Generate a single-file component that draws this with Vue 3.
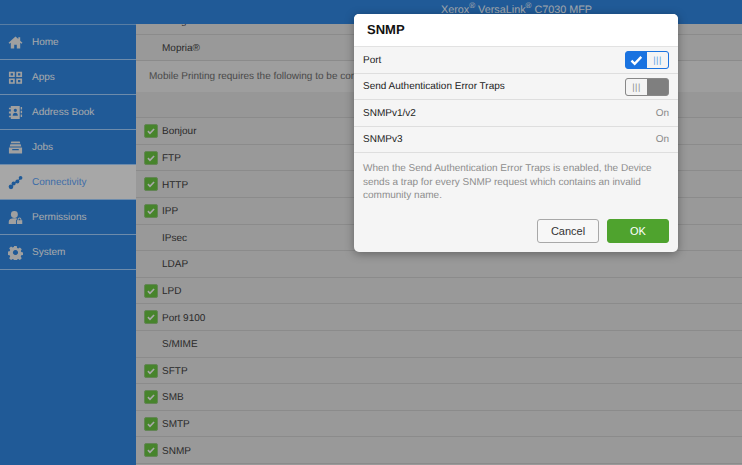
<template>
  <div class="screen">
    <header class="topbar">
      <span class="device">Xerox<sup>®</sup> VersaLink<sup>®</sup> C7030 MFP</span>
    </header>
    <div class="body">
      <nav class="sidebar">
        <a v-for="item in navItems" :key="item.name" class="nav-item" :class="{ active: item.name === 'Connectivity' }">
          <svg class="nav-icon" viewBox="0 0 16 16" v-html="item.icon"></svg>
          <span>{{ item.name }}</span>
        </a>
      </nav>
      <main class="content">
        <div class="list">
          <div class="row"><span class="name">Google Cloud Print</span></div>
          <div class="row"><span class="name">Mopria®</span></div>
          <div class="message">Mobile Printing requires the following to be configured:</div>
          <div class="band"></div>
          <div v-for="p in protocols" :key="p.name" class="row">
            <span v-if="p.on" class="check">
              <svg viewBox="0 0 14 14"><path d="M3.400 7.200 5.800 9.600l4.800-5" fill="none" stroke="#f2f2f2" stroke-width="1.900"/></svg>
            </span>
            <span class="name">{{ p.name }}</span>
          </div>
        </div>
      </main>
    </div>
    <div class="overlay"></div>
    <section class="dialog">
      <h2 class="dialog-title">SNMP</h2>
      <div class="dialog-row">
        <span>Port</span>
        <span class="toggle on">
          <span class="tick"><svg viewBox="0 0 14 12"><path d="M1.500 6.200 5 9.600l7.200-7.600" fill="none" stroke="#fff" stroke-width="2.600"/></svg></span>
          <span class="knob">|||</span>
        </span>
      </div>
      <div class="dialog-row">
        <span>Send Authentication Error Traps</span>
        <span class="toggle off">
          <span class="knob">|||</span>
          <span class="tick"></span>
        </span>
      </div>
      <div class="dialog-row">
        <span>SNMPv1/v2</span>
        <span class="state">On</span>
      </div>
      <div class="dialog-row">
        <span>SNMPv3</span>
        <span class="state">On</span>
      </div>
      <p class="help">When the Send Authentication Error Traps is enabled, the Device sends a trap for every SNMP request which contains an invalid community name.</p>
      <div class="actions">
        <button class="btn cancel">Cancel</button>
        <button class="btn ok">OK</button>
      </div>
    </section>
  </div>
</template>

<script setup>
const navItems = [
  { name: 'Home', icon: '<path d="M8 1.500 .6 8.300l1 1.100L3 8.200V14.500h3.600V10.400h2.800v4.100H13V8.200l1.400 1.200 1-1.100L13 6.100V2.400h-2v1.900z"/>' },
  { name: 'Apps', icon: '<path fill-rule="evenodd" d="M1 1.800h6.200v5.600H1zM2.800 3.400v2.400h2.600V3.400zM8.800 1.800H15v5.600H8.800zM10.600 3.400v2.400h2.600V3.400zM1 9h6.200v5.600H1zM2.800 10.600v2.400h2.600v-2.400zM8.800 9H15v5.600H8.800zM10.600 10.600v2.400h2.600v-2.400z"/>' },
  { name: 'Address Book', icon: '<path fill-rule="evenodd" d="M3 1h9.500v14H3v-2H1V11.500h2V9H1V7h2V4.500H1V3h2zM7.800 4a1.700 1.700 0 1 0 .01 0zM5 11.500h5.500c0-2-1-3.200-2.700-3.200S5 9.500 5 11.500z"/><path d="M13.500 2H15v2.800h-1.500zM13.500 6H15v2.800h-1.500zM13.500 10H15v2.800h-1.500z"/>' },
  { name: 'Jobs', icon: '<path d="M3.500 1.500h9l.6 2H2.900zM2.500 4.500h11l.7 2.500H1.800zM1 8h14v6.500H1zM4.500 9.500v1.500h7V9.500z" fill-rule="evenodd"/>' },
  { name: 'Connectivity', icon: '<g class="link"><circle cx="3.200" cy="12.600" r="2.500"/><circle cx="6" cy="9" r="2.200"/><circle cx="10" cy="7" r="2.100"/><circle cx="13.400" cy="3" r="2"/><path d="M3 12 5.500 8.200 10 6l3-3 .8.800-3.300 3.500-4.200 2-2.500 3.500z"/></g>' },
  { name: 'Permissions', icon: '<circle cx="6.800" cy="4.800" r="3.700"/><path d="M.8 15v-2.500C.8 10 3 8.800 6.800 8.800c1.200 0 2.300.1 3.200.4L8.500 11v4z"/><path fill-rule="evenodd" d="M9.500 11h.8v-1a2 2 0 0 1 4 0v1h.9v4H9.500zM11.300 11h2v-1a1 1 0 0 0-2 0z"/>' },
  { name: 'System', icon: '<path fill-rule="evenodd" d="M6.600 1h2.800l.4 2 1.300.6 1.800-1.100 2 2-1.100 1.800.6 1.300 2 .4v2.800l-2 .4-.6 1.300 1.100 1.800-2 2-1.800-1.100-1.300.6-.4 2H6.600l-.4-2-1.300-.6-1.800 1.100-2-2 1.100-1.800-.6-1.300-2-.4V7l2-.4.6-1.300-1.100-1.800 2-2 1.800 1.100 1.300-.6zM8 5.200a2.800 2.800 0 1 0 .01 0z" transform="translate(.2 .2) scale(.97)"/>' }
]

const protocols = [
  { name: 'Bonjour', on: true },
  { name: 'FTP', on: true },
  { name: 'HTTP', on: true },
  { name: 'IPP', on: true },
  { name: 'IPsec', on: false },
  { name: 'LDAP', on: false },
  { name: 'LPD', on: true },
  { name: 'Port 9100', on: true },
  { name: 'S/MIME', on: false },
  { name: 'SFTP', on: true },
  { name: 'SMB', on: true },
  { name: 'SMTP', on: true },
  { name: 'SNMP', on: true }
]
</script>

<style>
html, body {
  margin: 0;
  background: #979797;
}
</style>

<style scoped>
.screen {
  position: relative;
  width: 742px;
  height: 465px;
  overflow: hidden;
  font-family: "Liberation Sans", Arial, sans-serif;
  font-size: 10px;
  text-rendering: geometricPrecision;
  background: #dbdbdb;
}

.topbar {
  height: 24px;
  box-sizing: border-box;
  background: #2f82d9;
  padding-left: 441px;
  color: #e8f0f8;
  font-size: 10.8px;
  line-height: 20px;
}

.topbar sup {
  font-size: 8px;
  line-height: 0;
}

.body {
  display: flex;
  height: 441px;
}

.sidebar {
  width: 136px;
  flex: none;
  background: #2f82d9;
  border-top: 1px solid #7fb4ea;
  box-sizing: border-box;
}

.nav-item {
  display: flex;
  align-items: center;
  gap: 9px;
  height: 35px;
  box-sizing: border-box;
  padding: 1px 0 0 8px;
  color: #eef2f6;
  border-bottom: 1px solid #9cc8f5;
}

.nav-item.active {
  background: #f0f0f0;
  color: #5a9cf0;
}

.nav-icon {
  width: 15px;
  height: 15px;
  fill: #e6e6e6;
  flex: none;
}

.nav-icon :deep(.link) {
  fill: #2f82d9;
}

.content {
  flex: 1;
  overflow: hidden;
  background: #dbdbdb;
}

.list {
  margin-top: -16px;
}

.row {
  display: flex;
  align-items: center;
  height: 26.6px;
  box-sizing: border-box;
  padding: 2px 0 0 26px;
  position: relative;
  color: #3c3c3c;
  border-bottom: 1px solid #c8c8c8;
}

.check {
  position: absolute;
  left: 8px;
  top: 6px;
  width: 14px;
  height: 14px;
  box-sizing: border-box;
  border: 1px solid #8fbf7a;
  border-radius: 2px;
  background: #66bd40;
}

.check svg {
  display: block;
  width: 12px;
  height: 12px;
}

.message {
  height: 31px;
  box-sizing: border-box;
  padding: 10px 0 0 13px;
  color: #6a6a6a;
  white-space: nowrap;
  background: #e2e2e2;
}

.band {
  height: 26px;
  box-sizing: border-box;
  background: #d8d8d8;
  border-bottom: 1px solid #c8c8c8;
}

.overlay {
  position: absolute;
  inset: 0;
  background: rgba(0, 0, 0, 0.3);
}

.dialog {
  position: absolute;
  left: 354px;
  top: 14px;
  width: 324px;
  height: 238px;
  background: #f5f5f5;
  border-radius: 5px;
  box-shadow: 0 2px 10px rgba(0, 0, 0, 0.35);
  color: #222;
  overflow: hidden;
}

.dialog-title {
  margin: 0;
  height: 33px;
  box-sizing: border-box;
  padding-left: 13px;
  background: #fff;
  font-size: 13px;
  line-height: 32px;
  color: #111;
  border-bottom: 1px solid #e2e2e2;
}

.dialog-row {
  display: flex;
  align-items: center;
  justify-content: space-between;
  height: 26.5px;
  box-sizing: border-box;
  padding: 1px 9px 0;
  border-bottom: 1px solid #dedede;
}

.state {
  color: #8a8a8a;
}

.toggle {
  display: flex;
  width: 44px;
  height: 18px;
  box-sizing: border-box;
  border-radius: 3px;
  overflow: hidden;
}

.toggle.on {
  border: 1px solid #1a73e0;
  background: #1a73e0;
}

.toggle.off {
  border: 1px solid #888;
  background: #7f7f7f;
}

.tick {
  flex: 1;
  display: flex;
  align-items: center;
  justify-content: center;
}

.tick svg {
  width: 13px;
  height: 11px;
}

.knob {
  width: 21px;
  background: #f4f4f4;
  text-align: center;
  font-size: 9px;
  line-height: 16px;
  letter-spacing: 0.5px;
}

.on .knob {
  color: #5d9ce6;
}

.off .knob {
  color: #8a8a8a;
}

.help {
  margin: 0;
  padding: 9px 13px 0 9px;
  color: #8d8d8d;
  line-height: 13.5px;
  height: 57px;
}

.actions {
  display: flex;
  justify-content: flex-end;
  gap: 8px;
  padding-right: 9px;
}

.btn {
  width: 62px;
  height: 24px;
  border-radius: 3px;
  font-family: inherit;
  font-size: 11px;
  padding: 0;
}

.cancel {
  background: #f7f7f7;
  border: 1px solid #a8a8a8;
  color: #333;
}

.ok {
  background: #4fa32e;
  border: 1px solid #4fa32e;
  color: #fff;
}
</style>
